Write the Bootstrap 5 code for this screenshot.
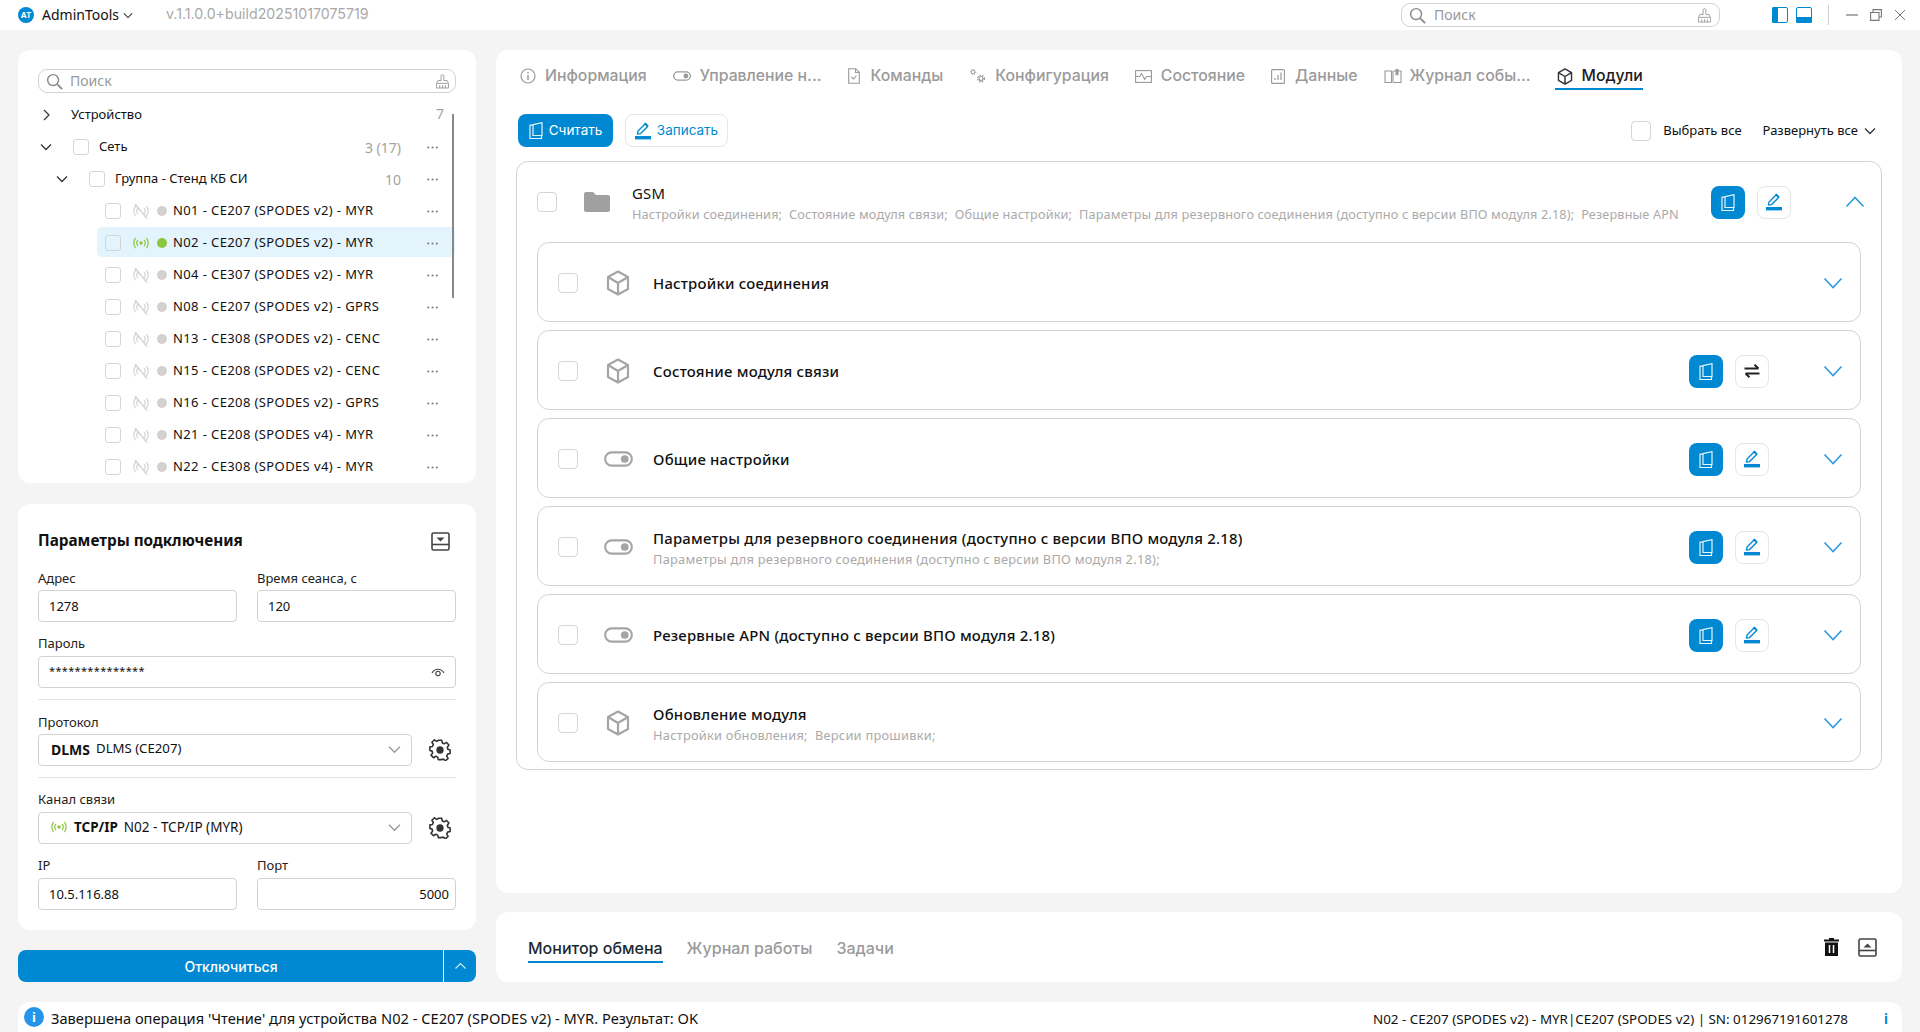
<!DOCTYPE html>
<html lang="ru">
<head>
<meta charset="utf-8">
<title>AdminTools</title>
<link href="https://cdn.jsdelivr.net/npm/bootstrap@5.3.0/dist/css/bootstrap.min.css" rel="stylesheet">
<style>
:root{--acc:#0089d2;--line:#d2d2d2;--mute:#a3a3a3}
html,body{height:1032px;overflow:hidden}
body{background:#f4f4f4;font-family:"Noto Sans","Liberation Sans",sans-serif;font-size:13px;color:#111;width:1920px}
svg{display:block;flex:none}
.app-top{height:30px;background:#fff;padding-left:18px}
.brand-dot{width:16px;height:16px;border-radius:50%;background:var(--acc);color:#fff;font:700 8px/16px "Inter",sans-serif;text-align:center}
.brand-name{font-size:14px;margin-left:8px;margin-right:5px;width:76px;white-space:nowrap;margin-top:-2px}
.brand-ver{color:#a9a9a9;font-family:"Inter",sans-serif;font-size:14.2px;margin-left:33px;margin-top:-2px}
.top-search{width:319px;height:24px;margin-left:auto;border:1px solid var(--line);border-radius:9px;padding:0 8px 0 7px;color:#999;font-size:14px}
.top-search span{margin-left:8px;flex:1;margin-top:-2px}
.tree-search span{margin-left:7px;flex:1;margin-top:-1px}
.panel-icons{margin-left:52px;gap:8px}
.win-sep{width:1px;height:20px;background:#d0d0d0;margin:0 17px 0 16px}
.win-btns{gap:12px;margin-right:14px}
.app-main{padding:20px 18px 0;gap:20px;height:952px}
.col-left{width:458px;flex:none}
.col-right{flex:1;min-width:0}
.sheet{background:#fff;border-radius:12px;border:0}
.tree-sheet{height:433px;padding:19px 20px 0;overflow:hidden;position:relative;margin-bottom:21px}
.tree-search{height:24px;border:1px solid var(--line);border-radius:9px;padding:0 6px 0 7px;color:#999;margin-bottom:6px;font-size:14px}
.tree-row{height:32px;position:relative}
.tree-row.is-on::before{content:"";position:absolute;left:59px;right:1px;top:0;height:30px;background:#e3f4fc;border-radius:5px}
.tree-row>*{position:relative}
.tick{width:16px;height:16px;border:1px solid #d4d4d4;border-radius:3px;background:#fff;flex:none;margin:0}
.tick-lg{width:20px;height:20px;border-radius:4px}
.tree-row.is-on .tick{background:transparent}
.arrow-box{width:35px;flex:none;padding-left:2px}
.tree-txt{margin-left:10px}
.dot-s{width:10px;height:10px;border-radius:50%;background:#d2d2d2;margin:0 6px 0 8px;flex:none}
.dot-on{background:#8cc63f}
.row-count{margin-left:auto;color:#a3a3a3;font-size:14px;width:60px;text-align:right}
.row-more{margin-left:auto;width:11px;margin-right:18px}
.row-count+.row-more{margin-left:26px}
.row-name{white-space:nowrap;letter-spacing:.03em}
.sig-slot{margin-left:12px}
.scroll-thumb{position:absolute;left:434px;top:64px;width:2px;height:184px;background:#888}
.conn-sheet{height:426px;padding:26px 20px 0;margin-bottom:20px}
.conn-title{font-weight:700;font-size:15.3px;height:22px}
.conn-title span{margin-top:-2px}
.fld-label{font-size:13px;line-height:18px;height:18px;color:#222}
.fld-pair{display:grid;grid-template-columns:199px 199px;column-gap:20px}
.form-control.fld,.fld{height:32px;border:1px solid var(--line);border-radius:4px;font-size:13px;padding:0 10px;color:#111;background:#fff;box-shadow:none;min-height:0}
.sep-line{margin:11px 0 13px;border:0;border-top:1px solid #e4e4e4;opacity:1}
.fld-sel{width:374px;padding:0 10px 2px 12px}
.btn.go-btn{height:32px;background:var(--acc);color:#fff;border:0;border-radius:8px;font-size:14px;font-weight:500;font-family:"Inter",sans-serif;padding:0}
.btn.go-split{width:33px;border-left:1px solid #fff;height:32px;flex:none}
.tabs-row{gap:26px;height:52px;padding:0 24px}
.tab-i{font-family:"Inter",sans-serif;font-size:15.8px;font-weight:500;color:#9a9a9a;height:52px;gap:9px;position:relative;white-space:nowrap}
.tab-i.is-act{color:#1c1c1c}
.tab-i.is-act::after{content:"";position:absolute;left:-2px;right:0;bottom:12px;height:2px;background:var(--acc)}
.main-sheet{height:843px;margin-bottom:19px;position:relative;padding-top:0}
.act-row{padding:0 20px 0 22px;height:33px;margin-top:12px;margin-bottom:14px}
.btn.act-fill,.btn.ic-fill{background:var(--acc);border:0;color:#fff;border-radius:8px}
.btn.act-fill svg,.btn.ic-fill svg{color:#e3f3fb}
.btn.act-line,.btn.ic-line{background:#fff;border:1px solid #e6e6e6;border-radius:8px;color:var(--acc)}
.btn.act-fill,.btn.act-line{height:33px;font-family:"Inter",sans-serif;font-size:13.5px;padding:0;gap:6px;justify-content:center}
.btn.act-fill{width:95px}
.btn.act-line{width:103px;margin-left:12px}
.btn.ic-fill,.btn.ic-line{width:34px;height:33px;padding:0;justify-content:center}
.sel-all{margin-left:auto;font-size:13px}
.sel-all .tick{margin-right:12px}
.exp-all{margin-left:21px;gap:6px;margin-right:6px;font-size:13px}
.outer-box{border:1px solid var(--line);border-radius:12px;margin:0 20px;height:609px;padding:0 20px 8px 20px}
.gsm-head{height:80px;position:relative;margin-right:-4px}
.card-line{border:1px solid var(--line);border-radius:12px;height:80px;margin-bottom:8px;padding:2px 17px 0 20px}
.ic-slot{width:26px;margin-left:27px;margin-right:22px;flex:none;display:flex;justify-content:center}
.ttl{font-size:14.9px;font-weight:500;line-height:21px;white-space:nowrap;letter-spacing:.015em;margin-top:3px}
.ttl:only-child{margin-top:1px}
.sub{font-size:12.8px;color:#aaa;line-height:21px;white-space:nowrap;overflow:hidden;letter-spacing:.02em}
.sub-tight{font-size:12.7px;letter-spacing:.012em}
.gap-area{flex:1;min-width:0}
.btn-wrap{gap:12px;margin-left:12px}
.chev-slot{width:20px;margin-left:54px;flex:none}
.log-sheet{height:70px;padding:0 25px 0 32px;position:relative}
.log-tab{font-family:"Inter",sans-serif;font-size:16px;font-weight:500;color:#9a9a9a;margin-right:24px;position:relative;top:1px}
.log-tab.is-act{color:#1c2b33}
.log-tab.is-act::after{content:"";position:absolute;left:0;right:0;bottom:-3px;height:2px;background:var(--acc)}
.status-bar{margin:20px 18px 0;height:30px;background:#fff;border-radius:12px 12px 0 0;padding:0 14px 0 6px;font-size:13.4px;white-space:nowrap}
.status-msg{font-size:14.65px;position:relative;top:2px}
.status-right{position:relative;top:2px}
.info-dot{width:20px;height:20px;border-radius:50%;background:#2495e8;color:#fff;text-align:center;font:700 13px/20px "Noto Sans",sans-serif;margin-right:7px;flex:none}
.info-i{color:var(--acc);font-weight:700;margin-left:36px;position:relative;top:2px}
.mono-stars{font-size:11px;letter-spacing:.03em;position:relative;top:-1px}
.sel-wide{font-size:13.2px;margin-left:6px}
.sel-strong{font-size:14px}
.sel-norm{font-size:13.5px;margin-left:6px}
</style>
</head>
<body>
<svg width="0" height="0" style="position:absolute">
<defs>
<symbol id="i-book" viewBox="0 0 14 17"><path d="M4 2.600 13 .7v12.800H4zM4 3.200H1v13.300h11.500v-3" fill="none" stroke="currentColor" stroke-width="1.200"/></symbol>
<symbol id="i-pen" viewBox="0 0 16 18"><path d="M2.500 12 3 9l7-7 2.600 2.600-7 7z" fill="none" stroke="currentColor" stroke-width="1.400"/><path d="M9 1.500l1.500-1 3 3-1 1.600z" fill="currentColor"/><rect y="14" x="0" width="16" height="3.400" fill="currentColor"/></symbol>
<symbol id="i-cube" viewBox="0 0 24 26"><path d="M12 1.500 22 7v12l-10 5.500L2 19V7zM2 7l10 6 10-6M12 13v11.500" fill="none" stroke="currentColor" stroke-width="2.200" stroke-linejoin="round"/></symbol>
<symbol id="i-tog" viewBox="0 0 30 16"><rect x="1.200" y="1.200" width="27.600" height="13.600" rx="6.800" fill="none" stroke="currentColor" stroke-width="2.200"/><circle cx="21.500" cy="8" r="4" fill="currentColor"/></symbol>
<symbol id="i-gear" viewBox="0 0 24 24"><path d="M10 2h4l.6 3 2.200 1 2.600-1.600 2.700 3-1.800 2.500.5 2.200 2.700 1v4l-2.900.6-1 2.200 1.600 2.600-3 2.700-2.500-1.800-2.200.5L14 24h-4l-.6-2.900-2.200-1-2.600 1.700-2.800-2.900L3.600 16.400 3 14.300 .5 13.500v-4L3.400 9l1-2.200L2.800 4.200l2.900-2.800 2.500 1.800 1.400-.7z" transform="translate(.5 -.5) scale(.96)" fill="none" stroke="currentColor" stroke-width="1.800" stroke-linejoin="round"/><circle cx="12" cy="12" r="4" fill="currentColor"/></symbol>
<symbol id="i-search" viewBox="0 0 18 18"><circle cx="7.500" cy="7.500" r="5.800" fill="none" stroke="currentColor" stroke-width="1.500"/><path d="m12 12 5 5" stroke="currentColor" stroke-width="1.800"/></symbol>
<symbol id="i-broom" viewBox="0 0 14 16"><path d="M5.500 1.500c0-1 3-1 3 0V7h3.500l1.500 3v5H.5v-5L2 7h3.500zM1 10h12M4 12v3M7 12v3M10 12v3" fill="none" stroke="currentColor" stroke-width="1"/></symbol>
<symbol id="i-sig" viewBox="0 0 16 14"><circle cx="8" cy="7" r="1.700" fill="currentColor"/><path d="M5 4a4.500 4.500 0 0 0 0 6M11 4a4.500 4.500 0 0 1 0 6M2.700 1.800a8 8 0 0 0 0 10.400M13.300 1.800a8 8 0 0 1 0 10.400" fill="none" stroke="currentColor" stroke-width="1.200"/></symbol>
<symbol id="i-sigoff" viewBox="0 0 16 16"><path d="M5 5a4.500 4.500 0 0 0 0 6M11 5a4.500 4.500 0 0 1 0 6M2.700 2.800a8 8 0 0 0 0 10.400M13.300 2.800a8 8 0 0 1 0 10.400" fill="none" stroke="currentColor" stroke-width="1.200"/><path d="m2 1 12 14.500" stroke="currentColor" stroke-width="1.400"/></symbol>
<symbol id="i-dn" viewBox="0 0 12 8"><path d="m1 1.500 5 5 5-5" fill="none" stroke="currentColor" stroke-width="1.300"/></symbol>
<symbol id="i-sw" viewBox="0 0 16 14"><path d="M.5 4.500h14M10.500.8l4 3.700M15.500 9.500H1.500M5.500 13.200 1.500 9.500" fill="none" stroke="currentColor" stroke-width="1.900"/></symbol>
<symbol id="i-more" viewBox="0 0 11 3"><circle cx="1.200" cy="1.500" r="1" fill="#777"/><circle cx="5.500" cy="1.500" r="1" fill="#777"/><circle cx="9.800" cy="1.500" r="1" fill="#777"/></symbol>
<symbol id="i-cdn" viewBox="0 0 20 12"><path d="m1.500 1.500 8.500 9 8.500-9" fill="none" stroke="currentColor" stroke-width="1.600"/></symbol>
<symbol id="i-cup" viewBox="0 0 20 12"><path d="m1.500 10.500 8.500-9 8.500 9" fill="none" stroke="currentColor" stroke-width="1.600"/></symbol>
</defs>
</svg>

<header class="app-top d-flex align-items-center">
  <div class="brand-dot">AT</div>
  <div class="brand-name">AdminTools</div>
  <svg width="10" height="7" style="color:#333"><use href="#i-dn"/></svg>
  <div class="brand-ver">v.1.1.0.0+build20251017075719</div>
  <div class="top-search d-flex align-items-center">
    <svg width="17" height="17" style="color:#888"><use href="#i-search"/></svg><span>Поиск</span>
    <svg width="13" height="15" style="color:#999"><use href="#i-broom"/></svg>
  </div>
  <div class="panel-icons d-flex">
    <svg width="16" height="16"><rect x=".5" y=".5" width="15" height="15" rx="1.500" fill="#fff" stroke="#0089d2"/><rect width="6" height="16" rx="1.500" fill="#0089d2"/></svg>
    <svg width="16" height="16"><rect x=".5" y=".5" width="15" height="15" rx="1.500" fill="#fff" stroke="#0089d2"/><rect y="10" width="16" height="6" rx="1.500" fill="#0089d2"/></svg>
  </div>
  <div class="win-sep"></div>
  <div class="win-btns d-flex align-items-center">
    <svg width="12" height="12"><path d="M0 6h12" stroke="#777" stroke-width="1.200"/></svg>
    <svg width="12" height="12"><path d="M3 3V.6h8.400V8H9M.6 3.500h8.400V11.400H.6z" fill="none" stroke="#777" stroke-width="1.100"/></svg>
    <svg width="12" height="12"><path d="m1 1 10 10M11 1 1 11" stroke="#777" stroke-width="1"/></svg>
  </div>
</header>

<main class="app-main d-flex">
  <div class="col-left">
    <section class="card sheet tree-sheet">
      <div class="tree-search d-flex align-items-center">
        <svg width="17" height="17" style="color:#888"><use href="#i-search"/></svg><span>Поиск</span>
        <svg width="13" height="15" style="color:#999"><use href="#i-broom"/></svg>
      </div>
      <div class="tree-row d-flex align-items-center">
        <div class="arrow-box" style="padding-left:5px;width:33px"><svg width="8" height="12" viewBox="0 0 8 12"><path d="m1 1 5 5-5 5" fill="none" stroke="#333" stroke-width="1.200"/></svg></div>
        <span>Устройство</span><span class="row-count ms-auto" style="margin-right:12px;position:relative;top:-2px">7</span>
      </div>
      <div class="tree-row d-flex align-items-center">
        <div class="arrow-box"><svg width="12" height="8" style="color:#333"><use href="#i-dn"/></svg></div>
        <span class="tick"></span><span class="tree-txt">Сеть</span><span class="row-count">3 (17)</span><span class="row-more"><svg width="11" height="3"><use href="#i-more"/></svg></span>
      </div>
      <div class="tree-row d-flex align-items-center" style="padding-left:16px">
        <div class="arrow-box"><svg width="12" height="8" style="color:#333"><use href="#i-dn"/></svg></div>
        <span class="tick"></span><span class="tree-txt">Группа - Стенд КБ СИ</span><span class="row-count">10</span><span class="row-more"><svg width="11" height="3"><use href="#i-more"/></svg></span>
      </div>
      <div class="tree-row d-flex align-items-center" style="padding-left:67px"><span class="tick"></span><svg width="16" height="16" class="sig-slot" style="color:#d2d2d2"><use href="#i-sigoff"/></svg><span class="dot-s"></span><span class="row-name">N01 - CE207 (SPODES v2) - MYR</span><span class="row-more"><svg width="11" height="3"><use href="#i-more"/></svg></span></div>
      <div class="tree-row is-on d-flex align-items-center" style="padding-left:67px"><span class="tick"></span><svg width="16" height="14" class="sig-slot" style="color:#8cc63f"><use href="#i-sig"/></svg><span class="dot-s dot-on"></span><span class="row-name">N02 - CE207 (SPODES v2) - MYR</span><span class="row-more"><svg width="11" height="3"><use href="#i-more"/></svg></span></div>
      <div class="tree-row d-flex align-items-center" style="padding-left:67px"><span class="tick"></span><svg width="16" height="16" class="sig-slot" style="color:#d2d2d2"><use href="#i-sigoff"/></svg><span class="dot-s"></span><span class="row-name">N04 - CE307 (SPODES v2) - MYR</span><span class="row-more"><svg width="11" height="3"><use href="#i-more"/></svg></span></div>
      <div class="tree-row d-flex align-items-center" style="padding-left:67px"><span class="tick"></span><svg width="16" height="16" class="sig-slot" style="color:#d2d2d2"><use href="#i-sigoff"/></svg><span class="dot-s"></span><span class="row-name">N08 - CE207 (SPODES v2) - GPRS</span><span class="row-more"><svg width="11" height="3"><use href="#i-more"/></svg></span></div>
      <div class="tree-row d-flex align-items-center" style="padding-left:67px"><span class="tick"></span><svg width="16" height="16" class="sig-slot" style="color:#d2d2d2"><use href="#i-sigoff"/></svg><span class="dot-s"></span><span class="row-name">N13 - CE308 (SPODES v2) - CENC</span><span class="row-more"><svg width="11" height="3"><use href="#i-more"/></svg></span></div>
      <div class="tree-row d-flex align-items-center" style="padding-left:67px"><span class="tick"></span><svg width="16" height="16" class="sig-slot" style="color:#d2d2d2"><use href="#i-sigoff"/></svg><span class="dot-s"></span><span class="row-name">N15 - CE208 (SPODES v2) - CENC</span><span class="row-more"><svg width="11" height="3"><use href="#i-more"/></svg></span></div>
      <div class="tree-row d-flex align-items-center" style="padding-left:67px"><span class="tick"></span><svg width="16" height="16" class="sig-slot" style="color:#d2d2d2"><use href="#i-sigoff"/></svg><span class="dot-s"></span><span class="row-name">N16 - CE208 (SPODES v2) - GPRS</span><span class="row-more"><svg width="11" height="3"><use href="#i-more"/></svg></span></div>
      <div class="tree-row d-flex align-items-center" style="padding-left:67px"><span class="tick"></span><svg width="16" height="16" class="sig-slot" style="color:#d2d2d2"><use href="#i-sigoff"/></svg><span class="dot-s"></span><span class="row-name">N21 - CE208 (SPODES v4) - MYR</span><span class="row-more"><svg width="11" height="3"><use href="#i-more"/></svg></span></div>
      <div class="tree-row d-flex align-items-center" style="padding-left:67px"><span class="tick"></span><svg width="16" height="16" class="sig-slot" style="color:#d2d2d2"><use href="#i-sigoff"/></svg><span class="dot-s"></span><span class="row-name">N22 - CE308 (SPODES v4) - MYR</span><span class="row-more"><svg width="11" height="3"><use href="#i-more"/></svg></span></div>
      <div class="scroll-thumb"></div>
    </section>

    <section class="card sheet conn-sheet">
      <div class="conn-title d-flex align-items-center justify-content-between">
        <span>Параметры подключения</span>
        <svg width="19" height="19" viewBox="0 0 19 19" style="margin-right:6px"><rect x="1" y="1" width="17" height="17" rx="1.500" fill="none" stroke="#444" stroke-width="1.600"/><path d="M1 12.500h17" stroke="#444" stroke-width="1.600"/><path d="M5.500 5.500h8l-4 4z" fill="#444"/></svg>
      </div>
      <div class="fld-pair" style="margin-top:17px">
        <div><div class="fld-label" style="margin-bottom:3px">Адрес</div><input class="form-control fld" value="1278"></div>
        <div><div class="fld-label" style="margin-bottom:3px">Время сеанса, с</div><input class="form-control fld" value="120"></div>
      </div>
      <div class="fld-label" style="margin-top:12px;margin-bottom:4px">Пароль</div>
      <div class="fld d-flex align-items-center justify-content-between">
        <span class="mono-stars">***************</span>
        <svg width="14" height="10" viewBox="0 0 14 10"><path d="M1 6c3-5 9-5 12 0" fill="none" stroke="#444" stroke-width="1.100"/><circle cx="7" cy="6.500" r="2.200" fill="none" stroke="#444" stroke-width="1.100"/></svg>
      </div>
      <hr class="sep-line">
      <div class="fld-label" style="margin-bottom:3px">Протокол</div>
      <div class="d-flex align-items-center">
        <div class="fld fld-sel d-flex align-items-center"><b class="sel-strong">DLMS</b><span class="sel-wide">DLMS (CE207)</span><svg width="13" height="9" class="ms-auto" style="color:#999"><use href="#i-dn"/></svg></div>
        <svg width="22" height="22" style="margin-left:17px;color:#333"><use href="#i-gear"/></svg>
      </div>
      <hr class="sep-line" style="margin-bottom:12px">
      <div class="fld-label" style="margin-bottom:4px">Канал связи</div>
      <div class="d-flex align-items-center">
        <div class="fld fld-sel d-flex align-items-center"><svg width="16" height="14" style="color:#8cc63f;margin-right:7px"><use href="#i-sig"/></svg><b class="sel-strong" style="font-size:13.500px">TCP/IP</b><span class="sel-norm">N02 - TCP/IP (MYR)</span><svg width="13" height="9" class="ms-auto" style="color:#999"><use href="#i-dn"/></svg></div>
        <svg width="22" height="22" style="margin-left:17px;color:#333"><use href="#i-gear"/></svg>
      </div>
      <div class="fld-pair" style="margin-top:12px">
        <div><div class="fld-label" style="margin-bottom:4px">IP</div><input class="form-control fld" value="10.5.116.88"></div>
        <div><div class="fld-label" style="margin-bottom:4px">Порт</div><input class="form-control fld text-end" style="padding-right:6px" value="5000"></div>
      </div>
    </section>

    <div class="btn-group d-flex" role="group">
      <button class="btn go-btn flex-fill" type="button">Отключиться</button>
      <button class="btn go-btn go-split d-flex align-items-center justify-content-center flex-grow-0" type="button" aria-label="Развернуть"><svg width="13" height="8" viewBox="0 0 12 8"><path d="m1 6.500 5-5 5 5" fill="none" stroke="#cfe9f7" stroke-width="1.200"/></svg></button>
    </div>
  </div>

  <div class="col-right">
    <section class="card sheet main-sheet">
      <nav class="tabs-row d-flex align-items-center">
        <div class="tab-i d-flex align-items-center"><svg width="16" height="16" viewBox="0 0 16 16"><circle cx="8" cy="8" r="7" fill="none" stroke="#999" stroke-width="1.200"/><path d="M8 7v5M8 4v1.600" stroke="#999" stroke-width="1.500"/></svg>Информация</div>
        <div class="tab-i d-flex align-items-center"><svg width="18" height="10" style="color:#999"><use href="#i-tog"/></svg>Управление н...</div>
        <div class="tab-i d-flex align-items-center" style="gap:11px"><svg width="12" height="16" viewBox="0 0 12 16"><path d="M.7.7h7l3.600 3.600v11H.7zM7.500.7v3.800h3.800M3.500 9l2 2 3-3.500" fill="none" stroke="#999" stroke-width="1.100"/></svg>Команды</div>
        <div class="tab-i d-flex align-items-center"><svg width="17" height="16" viewBox="0 0 17 16"><g fill="none" stroke="#999"><circle cx="4" cy="4" r="1.700" stroke-width=".9"/><circle cx="4" cy="4" r="2.700" stroke-width="1" stroke-dasharray="1 1.100"/><circle cx="12" cy="10.500" r="2" stroke-width="1.100"/><circle cx="12" cy="10.500" r="3.400" stroke-width="1.300" stroke-dasharray="1.500 1.300"/></g></svg>Конфигурация</div>
        <div class="tab-i d-flex align-items-center"><svg width="17" height="13" viewBox="0 0 17 13"><rect x=".6" y=".6" width="15.800" height="11.800" fill="none" stroke="#999" stroke-width="1.100"/><path d="M.6 6.500h4l2-3 3 6 2-3h4.800" fill="none" stroke="#999" stroke-width="1.100"/></svg>Состояние</div>
        <div class="tab-i d-flex align-items-center" style="gap:10px"><svg width="14" height="15" viewBox="0 0 14 15"><rect x=".6" y=".6" width="12.800" height="13.800" rx="1" fill="none" stroke="#999" stroke-width="1.100"/><path d="M4 11V9M7 11V6M10 11V3.500" stroke="#999" stroke-width="1.200"/></svg>Данные</div>
        <div class="tab-i d-flex align-items-center" style="gap:8px"><svg width="18" height="16" viewBox="0 0 18 16"><path d="M1 3h6.500v11.500H1zM9 3h8v11.500H9M9 3v11.500" fill="none" stroke="#999" stroke-width="1.100"/><path d="M11.500 1h3v7l-1.500-1.500L11.500 8z" fill="#999"/></svg>Журнал собы...</div>
        <div class="tab-i is-act d-flex align-items-center"><svg width="16" height="17" style="color:#333"><use href="#i-cube"/></svg>Модули</div>
      </nav>
      <div class="act-row d-flex align-items-center">
        <button class="btn act-fill d-flex align-items-center" type="button"><svg width="14" height="17"><use href="#i-book"/></svg>Считать</button>
        <button class="btn act-line d-flex align-items-center" type="button"><svg width="16" height="18"><use href="#i-pen"/></svg>Записать</button>
        <div class="sel-all d-flex align-items-center"><span class="tick tick-lg"></span>Выбрать все</div>
        <div class="exp-all d-flex align-items-center">Развернуть все<svg width="12" height="8" style="color:#333"><use href="#i-dn"/></svg></div>
      </div>
      <div class="outer-box">
        <div class="gsm-head d-flex align-items-center">
          <span class="tick tick-lg"></span>
          <span class="ic-slot"><svg width="26" height="20" viewBox="0 0 26 20"><path d="M0 2a2 2 0 0 1 2-2h7l3 3h12a2 2 0 0 1 2 2v13a2 2 0 0 1-2 2H2a2 2 0 0 1-2-2z" fill="#a0a0a0"/></svg></span>
          <div class="gap-area"><div class="ttl" style="font-weight:400">GSM</div><div class="sub sub-tight">Настройки соединения;&nbsp; Состояние модуля связи;&nbsp; Общие настройки;&nbsp; Параметры для резервного соединения (доступно с версии ВПО модуля 2.18);&nbsp; Резервные APN</div></div>
          <div class="btn-wrap d-flex"><button class="btn ic-fill d-flex align-items-center" type="button" aria-label="Считать"><svg width="14" height="17"><use href="#i-book"/></svg></button><button class="btn ic-line d-flex align-items-center" type="button" aria-label="Записать"><svg width="16" height="18"><use href="#i-pen"/></svg></button></div>
          <div class="chev-slot" style="color:#2a9cdc"><svg width="20" height="12"><use href="#i-cup"/></svg></div>
        </div>
        <div class="card-line d-flex align-items-center">
          <span class="tick tick-lg"></span><span class="ic-slot" style="color:#a5a5a5"><svg width="24" height="26"><use href="#i-cube"/></svg></span>
          <div class="gap-area"><div class="ttl">Настройки соединения</div></div>
          <div class="chev-slot" style="color:#2a9cdc"><svg width="20" height="12"><use href="#i-cdn"/></svg></div>
        </div>
        <div class="card-line d-flex align-items-center">
          <span class="tick tick-lg"></span><span class="ic-slot" style="color:#a5a5a5"><svg width="24" height="26"><use href="#i-cube"/></svg></span>
          <div class="gap-area"><div class="ttl">Состояние модуля связи</div></div>
          <div class="btn-wrap d-flex"><button class="btn ic-fill d-flex align-items-center" type="button" aria-label="Считать"><svg width="14" height="17"><use href="#i-book"/></svg></button><button class="btn ic-line d-flex align-items-center" type="button" aria-label="Обмен" style="color:#222"><svg width="16" height="14"><use href="#i-sw"/></svg></button></div>
          <div class="chev-slot" style="color:#2a9cdc"><svg width="20" height="12"><use href="#i-cdn"/></svg></div>
        </div>
        <div class="card-line d-flex align-items-center">
          <span class="tick tick-lg"></span><span class="ic-slot" style="color:#a5a5a5"><svg width="29" height="16"><use href="#i-tog"/></svg></span>
          <div class="gap-area"><div class="ttl">Общие настройки</div></div>
          <div class="btn-wrap d-flex"><button class="btn ic-fill d-flex align-items-center" type="button" aria-label="Считать"><svg width="14" height="17"><use href="#i-book"/></svg></button><button class="btn ic-line d-flex align-items-center" type="button" aria-label="Записать"><svg width="16" height="18"><use href="#i-pen"/></svg></button></div>
          <div class="chev-slot" style="color:#2a9cdc"><svg width="20" height="12"><use href="#i-cdn"/></svg></div>
        </div>
        <div class="card-line d-flex align-items-center">
          <span class="tick tick-lg"></span><span class="ic-slot" style="color:#a5a5a5"><svg width="29" height="16"><use href="#i-tog"/></svg></span>
          <div class="gap-area"><div class="ttl">Параметры для резервного соединения (доступно с версии ВПО модуля 2.18)</div><div class="sub">Параметры для резервного соединения (доступно с версии ВПО модуля 2.18);</div></div>
          <div class="btn-wrap d-flex"><button class="btn ic-fill d-flex align-items-center" type="button" aria-label="Считать"><svg width="14" height="17"><use href="#i-book"/></svg></button><button class="btn ic-line d-flex align-items-center" type="button" aria-label="Записать"><svg width="16" height="18"><use href="#i-pen"/></svg></button></div>
          <div class="chev-slot" style="color:#2a9cdc"><svg width="20" height="12"><use href="#i-cdn"/></svg></div>
        </div>
        <div class="card-line d-flex align-items-center">
          <span class="tick tick-lg"></span><span class="ic-slot" style="color:#a5a5a5"><svg width="29" height="16"><use href="#i-tog"/></svg></span>
          <div class="gap-area"><div class="ttl">Резервные APN (доступно с версии ВПО модуля 2.18)</div></div>
          <div class="btn-wrap d-flex"><button class="btn ic-fill d-flex align-items-center" type="button" aria-label="Считать"><svg width="14" height="17"><use href="#i-book"/></svg></button><button class="btn ic-line d-flex align-items-center" type="button" aria-label="Записать"><svg width="16" height="18"><use href="#i-pen"/></svg></button></div>
          <div class="chev-slot" style="color:#2a9cdc"><svg width="20" height="12"><use href="#i-cdn"/></svg></div>
        </div>
        <div class="card-line d-flex align-items-center">
          <span class="tick tick-lg"></span><span class="ic-slot" style="color:#a5a5a5"><svg width="24" height="26"><use href="#i-cube"/></svg></span>
          <div class="gap-area"><div class="ttl">Обновление модуля</div><div class="sub">Настройки обновления;&nbsp; Версии прошивки;</div></div>
          <div class="chev-slot" style="color:#2a9cdc"><svg width="20" height="12"><use href="#i-cdn"/></svg></div>
        </div>
      </div>
    </section>
    <section class="card sheet log-sheet flex-row align-items-center">
      <span class="log-tab is-act">Монитор обмена</span>
      <span class="log-tab">Журнал работы</span>
      <span class="log-tab">Задачи</span>
      <svg class="ms-auto" width="15" height="18" viewBox="0 0 15 18"><path d="M5 0h5v1.500h5v2H0v-2h5zM1 4.500h13V18H1z" fill="#111"/><path d="M5.500 7v8M9.500 7v8" stroke="#fff" stroke-width="1.500"/></svg>
      <svg width="19" height="19" viewBox="0 0 19 19" style="margin-left:19px"><rect x="1" y="1" width="17" height="17" rx="1.500" fill="none" stroke="#444" stroke-width="1.600"/><path d="M1 12.500h17" stroke="#444" stroke-width="1.600"/><path d="M5.500 9.500h8l-4-4z" fill="#444"/></svg>
    </section>
  </div>
</main>

<footer class="status-bar d-flex align-items-center">
  <div class="info-dot">i</div>
  <span class="status-msg">Завершена операция 'Чтение' для устройства N02 - CE207 (SPODES v2) - MYR. Результат: OK</span>
  <span class="ms-auto status-right">N02 - CE207 (SPODES v2) - MYR|CE207 (SPODES v2) | SN: 012967191601278</span>
  <span class="info-i">i</span>
</footer>
<script src="https://cdn.jsdelivr.net/npm/bootstrap@5.3.0/dist/js/bootstrap.bundle.min.js"></script>
</body>
</html>
